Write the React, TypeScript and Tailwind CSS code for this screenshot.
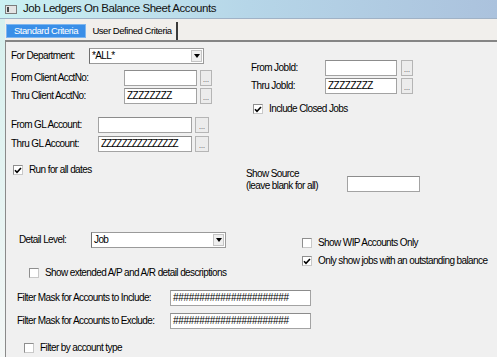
import React from "react";

// small win-forms style controls
const TextBox = ({ w, text, track = "" }: { w: string; text?: string; track?: string }) => (
  <div
    className={`${w} h-[16px] shrink-0 bg-white border border-[#a3a3a3] border-t-[#8c8c8c] flex items-center pl-[2px] overflow-hidden whitespace-nowrap ${track}`}
  >
    {text}
  </div>
);

const Browse = ({ w = "w-[12px]" }: { w?: string }) => (
  <div
    className={`${w} h-[16px] shrink-0 bg-[#ececec] border border-[#b5b5b5] flex items-end justify-center pb-[2px] text-[7px] leading-none tracking-normal text-[#333]`}
  >
    ...
  </div>
);

const Combo = ({ w, text }: { w: string; text: string }) => (
  <div className={`${w} h-[16px] shrink-0 bg-white border border-[#9a9a9a] border-l-[#6f6f6f] flex items-center justify-between pl-[2px] pr-[1px]`}>
    <span>{text}</span>
    <div className="w-[11px] h-[12px] bg-[#efefef] border border-[#c4c4c4] flex items-center justify-center">
      <svg width="6" height="4" viewBox="0 0 6 4">
        <path d="M0 0h6L3 4z" fill="#000" />
      </svg>
    </div>
  </div>
);

const Check = ({ checked, label }: { checked?: boolean; label: string }) => (
  <div className="flex items-center h-[10px] gap-[6px]">
    <div className="w-[10px] h-[10px] shrink-0 bg-white border border-[#8e8e8e] border-b-[#c8c8c8] border-r-[#c8c8c8] flex items-center justify-center">
      {checked && (
        <svg width="8" height="7" viewBox="0 0 8 7">
          <path d="M1 3.2l2 2.2L7 1" stroke="#000" strokeWidth="1.6" fill="none" />
        </svg>
      )}
    </div>
    <span className="whitespace-nowrap">{label}</span>
  </div>
);

const Label = ({ w, children }: { w: string; children: React.ReactNode }) => (
  <span className={`${w} shrink-0 whitespace-nowrap`}>{children}</span>
);

export default function App() {
  return (
    <div className="w-[497px] h-[357px] overflow-hidden bg-[#f0f0f0] text-black font-['Liberation_Sans',Arial,sans-serif] text-[10px] tracking-[-0.6px] leading-none">
      {/* Title bar */}
      <div className="h-[19px] flex items-center gap-[6px] pl-[5px] bg-gradient-to-r from-[#cbf1f3] via-[#b6d6e8] to-[#abc2dd] border-b border-[#a0b2c6]">
        <svg width="12" height="9" viewBox="0 0 12 9">
          <rect x="0.5" y="0.5" width="11" height="8" fill="#e4e4e4" stroke="#7c7c7c" />
          <rect x="2" y="2" width="2" height="5" fill="#4a4a4a" />
        </svg>
        <span className="text-[11.5px] tracking-[-0.45px] text-[#111]">Job Ledgers On Balance Sheet Accounts</span>
      </div>

      <div className="flex">
        {/* window edge */}
        <div className="w-[5px] shrink-0 h-[338px] bg-gradient-to-b from-[#d6f0ee] to-[#f4f7f6]" />

        <div className="flex-1">
          {/* Tabs */}
          <div className="h-[23px] flex items-end gap-[2px] pl-[1px] border-b-2 border-[#858585] bg-[#f1efec]">
            <div className="w-[80px] h-[14px] mb-[2px] bg-[#3a8fe8] border border-[#7fb6ee] text-white flex items-center justify-center text-[9.5px] tracking-[-0.45px]">
              Standard Criteria
            </div>
            <div className="w-[90px] h-[18px] flex items-center justify-center text-[9.5px] tracking-[-0.45px] border-r-2 border-[#3a3a3a]">
              User Defined Criteria
            </div>
          </div>

          {/* Panel */}
          <div className="border-l border-[#8a8a8a] h-[315px]">
            <div className="flex">
              {/* left column */}
              <div className="w-[234px] pl-[5px] flex flex-col">
                <div className="flex items-center mt-[6px]">
                  <Label w="w-[78px]">For Department:</Label>
                  <Combo w="w-[115px]" text="*ALL*" />
                </div>
                <div className="flex items-center mt-[6px] gap-[3px]">
                  <Label w="w-[110px]">From Client AcctNo:</Label>
                  <TextBox w="w-[73px]" />
                  <Browse />
                </div>
                <div className="flex items-center mt-[2px] gap-[3px]">
                  <Label w="w-[110px]">Thru Client AcctNo:</Label>
                  <TextBox w="w-[73px]" text="ZZZZZZZZ" track="tracking-[-0.5px]" />
                  <Browse />
                </div>
                <div className="flex items-center mt-[13px] gap-[3px]">
                  <Label w="w-[84px]">From GL Account:</Label>
                  <TextBox w="w-[94px]" />
                  <Browse w="w-[14px]" />
                </div>
                <div className="flex items-center mt-[3px] gap-[3px]">
                  <Label w="w-[84px]">Thru GL Account:</Label>
                  <TextBox w="w-[94px]" text="ZZZZZZZZZZZZZZZ" track="tracking-[-1px]" />
                  <Browse w="w-[14px]" />
                </div>
                <div className="mt-[13px] pl-[2px]">
                  <Check checked label="Run for all dates" />
                </div>
              </div>

              {/* right column */}
              <div className="flex-1 flex flex-col">
                <div className="flex items-center mt-[18px] pl-[11px] gap-[4px]">
                  <Label w="w-[70px]">From JobId:</Label>
                  <TextBox w="w-[72px]" />
                  <Browse />
                </div>
                <div className="flex items-center mt-[2px] pl-[11px] gap-[4px]">
                  <Label w="w-[70px]">Thru JobId:</Label>
                  <TextBox w="w-[72px]" text="ZZZZZZZZ" track="tracking-[-0.5px]" />
                  <Browse />
                </div>
                <div className="mt-[10px] pl-[13px]">
                  <Check checked label="Include Closed Jobs" />
                </div>
                <div className="flex mt-[55px] pl-[6px]">
                  <div className="w-[101px] shrink-0 flex flex-col gap-[2px]">
                    <span>Show Source</span>
                    <span>(leave blank for all)</span>
                  </div>
                  <div className="mt-[7px]">
                    <TextBox w="w-[73px]" />
                  </div>
                </div>
              </div>
            </div>

            {/* middle section */}
            <div className="flex mt-[40px]">
              <div className="w-[234px] flex flex-col">
                <div className="flex items-center pl-[13px]">
                  <Label w="w-[72px]">Detail Level:</Label>
                  <Combo w="w-[135px]" text="Job" />
                </div>
                <div className="mt-[20px] pl-[23px]">
                  <Check label="Show extended A/P and A/R detail descriptions" />
                </div>
              </div>
              <div className="flex-1 flex flex-col pl-[62px]">
                <div className="mt-[6px]">
                  <Check label="Show WIP Accounts Only" />
                </div>
                <div className="mt-[8px]">
                  <Check checked label="Only show jobs with an outstanding balance" />
                </div>
              </div>
            </div>

            {/* filter masks */}
            <div className="flex items-center mt-[12px] pl-[11px]">
              <Label w="w-[153px]">Filter Mask for Accounts to Include:</Label>
              <TextBox w="w-[141px]" text="######################" track="tracking-[-0.3px]" />
            </div>
            <div className="flex items-center mt-[7px] pl-[11px]">
              <Label w="w-[153px]">Filter Mask for Accounts to Exclude:</Label>
              <TextBox w="w-[141px]" text="######################" track="tracking-[-0.3px]" />
            </div>
            <div className="mt-[14px] pl-[18px]">
              <Check label="Filter by account type" />
            </div>
          </div>
        </div>
      </div>
    </div>
  );
}
